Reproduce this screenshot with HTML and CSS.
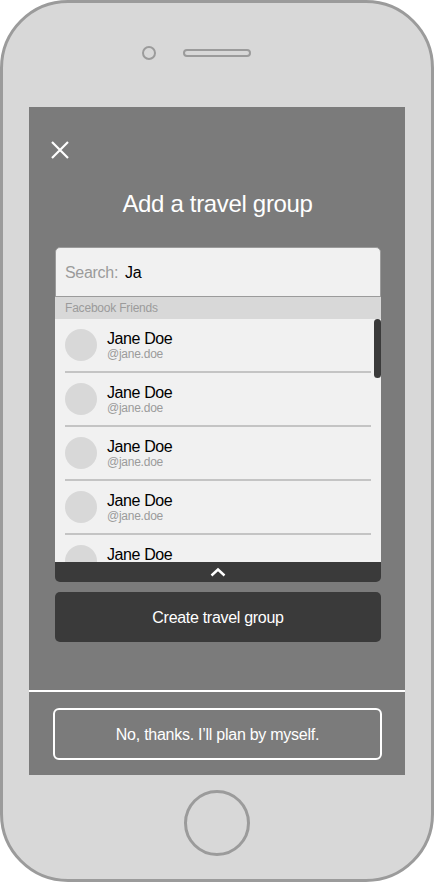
FILE: index.html
```html
<!DOCTYPE html>
<html lang="en">
<head>
  <meta charset="UTF-8">
  <title>Add a travel group</title>
  <link rel="stylesheet" href="styles.css">
</head>
<body>

<div class="phone">
  <!-- Camera and speaker -->
  <div class="phone-top">
    <span class="camera"></span>
    <span class="speaker"></span>
  </div>

  <div class="screen">
    <div class="screen-main">
      <svg class="close-icon" width="18" height="18" viewBox="0 0 18 18">
        <path d="M1 1L17 17M17 1L1 17" stroke="#ffffff" stroke-width="2.2" fill="none"/>
      </svg>

      <h1 class="title">Add a travel group</h1>

      <div class="picker">
        <div class="search-row">
          <span class="search-label">Search:</span>
          <span class="search-value">Ja</span>
        </div>
        <div class="section-label">Facebook Friends</div>

        <div class="friend-list">
          <div class="friend">
            <span class="avatar"></span>
            <div class="friend-text">
              <div class="friend-name">Jane Doe</div>
              <div class="friend-handle">@jane.doe</div>
            </div>
          </div>
          <div class="friend">
            <span class="avatar"></span>
            <div class="friend-text">
              <div class="friend-name">Jane Doe</div>
              <div class="friend-handle">@jane.doe</div>
            </div>
          </div>
          <div class="friend">
            <span class="avatar"></span>
            <div class="friend-text">
              <div class="friend-name">Jane Doe</div>
              <div class="friend-handle">@jane.doe</div>
            </div>
          </div>
          <div class="friend">
            <span class="avatar"></span>
            <div class="friend-text">
              <div class="friend-name">Jane Doe</div>
              <div class="friend-handle">@jane.doe</div>
            </div>
          </div>
          <!-- Last row runs under the footer, handle is out of view -->
          <div class="friend">
            <span class="avatar"></span>
            <div class="friend-text">
              <div class="friend-name">Jane Doe</div>
            </div>
          </div>
          <span class="scrollbar"></span>
        </div>

        <div class="picker-footer">
          <svg width="16" height="10" viewBox="0 0 16 10">
            <path d="M1.5 8.5L8 2.5L14.5 8.5" stroke="#ffffff" stroke-width="2.4" fill="none"/>
          </svg>
        </div>
      </div>

      <button class="btn-create">Create travel group</button>
    </div>

    <div class="screen-bottom">
      <button class="btn-skip">No, thanks. I’ll plan by myself.</button>
    </div>
  </div>

  <div class="phone-bottom">
    <span class="home-button"></span>
  </div>
</div>

</body>
</html>
```

FILE: styles.css
```css
* {
  box-sizing: border-box;
}

body {
  margin: 0;
  background-color: #ffffff;
  font-family: 'Liberation Sans', Arial, sans-serif;
}

.phone {
  width: 434px;
  height: 882px;
  background-color: #d8d8d8;
  border: 3px solid #9b9b9b;
  border-radius: 68px;
  display: flex;
  flex-direction: column;
  align-items: center;
  overflow: hidden;
}

.phone-top {
  height: 104px;
  width: 100%;
  display: flex;
  justify-content: center;
  align-items: center;
  gap: 27px;
  padding-bottom: 5px;
  padding-right: 41px;
}

.camera {
  width: 14px;
  height: 14px;
  border: 2px solid #9b9b9b;
  border-radius: 50%;
}

.speaker {
  width: 68px;
  height: 8px;
  border: 2px solid #9b9b9b;
  border-radius: 4px;
}

.screen {
  width: 376px;
  height: 668px;
  background-color: #7b7b7b;
  display: flex;
  flex-direction: column;
}

.screen-main {
  height: 585px;
  padding: 34px 25px 0 26px;
  border-bottom: 2px solid #ffffff;
  display: flex;
  flex-direction: column;
}

.close-icon {
  margin-left: -4px;
  flex-shrink: 0;
}

.title {
  margin: 25px 0 0;
  color: #ffffff;
  font-size: 24px;
  font-weight: normal;
  letter-spacing: -0.33px;
  line-height: 40px;
  text-align: center;
}

.picker {
  margin-top: 23px;
  width: 326px;
  border-radius: 5px;
  overflow: hidden;
}

.search-row {
  height: 50px;
  background-color: #f1f1f1;
  border: 1px solid #9b9b9b;
  border-radius: 5px 5px 0 0;
  display: flex;
  align-items: center;
  padding: 2px 0 0 9px;
  gap: 7px;
  font-size: 16px;
  letter-spacing: -0.3px;
}

.search-label {
  color: #9b9b9b;
}

.search-value {
  color: #000000;
}

.section-label {
  height: 22px;
  background-color: #d8d8d8;
  color: #9b9b9b;
  font-size: 12px;
  letter-spacing: -0.2px;
  line-height: 22px;
  padding-left: 10px;
}

.friend-list {
  position: relative;
  height: 243px;
  background-color: #f1f1f1;
  padding: 0 10px;
  overflow: hidden;
}

.friend {
  height: 54px;
  border-bottom: 2px solid #c4c4c4;
  display: flex;
  align-items: flex-start;
  padding-top: 10px;
  gap: 10px;
}

.avatar {
  width: 32px;
  height: 32px;
  border-radius: 50%;
  background-color: #d8d8d8;
  flex-shrink: 0;
}

.friend-text {
  padding-top: 1px;
}

.friend-name {
  font-size: 16px;
  letter-spacing: -0.4px;
  line-height: 17px;
  color: #000000;
}

.friend-handle {
  font-size: 12px;
  letter-spacing: -0.25px;
  line-height: 14px;
  color: #9b9b9b;
}

.scrollbar {
  position: absolute;
  top: 0;
  right: 0;
  width: 7px;
  height: 59px;
  border-radius: 4px;
  background-color: #3a3a3a;
}

.picker-footer {
  height: 20px;
  background-color: #3a3a3a;
  display: flex;
  justify-content: center;
  align-items: center;
}

.btn-create {
  margin-top: 10px;
  width: 326px;
  height: 50px;
  padding: 2px 0 0;
  background-color: #3a3a3a;
  color: #ffffff;
  border: none;
  border-radius: 5px;
  font-family: inherit;
  font-size: 16px;
  letter-spacing: -0.3px;
}

.screen-bottom {
  flex: 1;
  padding: 16px 23px 0 24px;
}

.btn-skip {
  width: 329px;
  height: 52px;
  padding: 2px 0 0;
  background-color: transparent;
  color: #ffffff;
  border: 2px solid #ffffff;
  border-radius: 6px;
  font-family: inherit;
  font-size: 16px;
  letter-spacing: -0.26px;
}

.phone-bottom {
  flex: 1;
  display: flex;
  justify-content: center;
  align-items: center;
  padding-bottom: 8px;
}

.home-button {
  width: 66px;
  height: 66px;
  border: 3px solid #9b9b9b;
  border-radius: 50%;
}
```
